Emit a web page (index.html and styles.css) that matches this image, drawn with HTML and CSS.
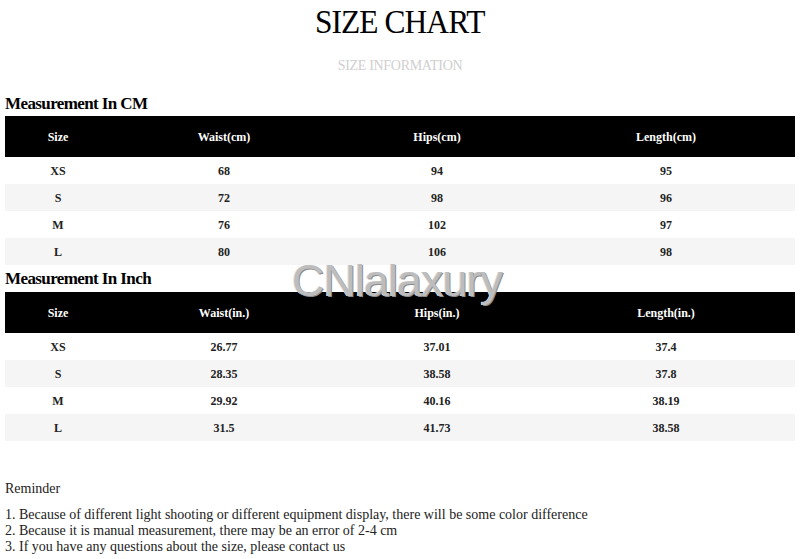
FILE: index.html
```html
<!DOCTYPE html>
<html>
<head>
<meta charset="utf-8">
<link rel="stylesheet" href="styles.css">
</head>
<body>
<div class="page">
  <h1 class="title"><span class="title-text">SIZE CHART</span></h1>
  <div class="subtitle">SIZE INFORMATION</div>

  <h2 class="section">Measurement In CM</h2>
  <table class="chart">
    <colgroup><col class="c1"><col class="c2"><col class="c3"><col class="c4"></colgroup>
    <thead><tr><th>Size</th><th>Waist(cm)</th><th>Hips(cm)</th><th>Length(cm)</th></tr></thead>
    <tbody>
      <tr><td>XS</td><td>68</td><td>94</td><td>95</td></tr>
      <tr><td>S</td><td>72</td><td>98</td><td>96</td></tr>
      <tr><td>M</td><td>76</td><td>102</td><td>97</td></tr>
      <tr><td>L</td><td>80</td><td>106</td><td>98</td></tr>
    </tbody>
  </table>

  <h2 class="section sec2">Measurement In Inch</h2>
  <table class="chart">
    <colgroup><col class="c1"><col class="c2"><col class="c3"><col class="c4"></colgroup>
    <thead><tr><th>Size</th><th>Waist(in.)</th><th>Hips(in.)</th><th>Length(in.)</th></tr></thead>
    <tbody>
      <tr><td>XS</td><td>26.77</td><td>37.01</td><td>37.4</td></tr>
      <tr><td>S</td><td>28.35</td><td>38.58</td><td>37.8</td></tr>
      <tr><td>M</td><td>29.92</td><td>40.16</td><td>38.19</td></tr>
      <tr><td>L</td><td>31.5</td><td>41.73</td><td>38.58</td></tr>
    </tbody>
  </table>

  <div class="reminder">Reminder</div>
  <div class="notes">
    <div>1. Because of different light shooting or different equipment display, there will be some color difference</div>
    <div>2. Because it is manual measurement, there may be an error of 2-4 cm</div>
    <div>3. If you have any questions about the size, please contact us</div>
  </div>

  <div class="watermark">CNlalaxury</div>
</div>
</body>
</html>
```

FILE: styles.css
```css
html, body {
  margin: 0;
  padding: 0;
  background: #fff;
}
body {
  font-family: "Liberation Serif", "Times New Roman", serif;
  color: #000;
}
.page {
  position: relative;
  width: 800px;
  height: 559px;
  overflow: hidden;
  padding: 0 5px;
  box-sizing: border-box;
}
.title {
  margin: 0;
  height: 44px;
  line-height: 44px;
  font-size: 34px;
  font-weight: normal;
  text-align: center;
}
.title-text {
  display: inline-block;
  letter-spacing: -1px;
  transform: scaleX(0.925);
}
.subtitle {
  height: 44px;
  line-height: 44px;
  font-size: 14px;
  color: #cfcfcf;
  text-align: center;
  letter-spacing: -0.3px;
}
.section {
  margin: 4px 0 0;
  height: 24px;
  line-height: 24px;
  font-size: 17px;
  font-weight: bold;
  letter-spacing: -0.6px;
}
.sec2 {
  margin-top: 1px;
  height: 26px;
  line-height: 26px;
}
.chart {
  width: 790px;
  border-collapse: collapse;
  table-layout: fixed;
  font-size: 12px;
  font-weight: bold;
}
.c1 { width: 106px; }
.c2 { width: 226px; }
.c3 { width: 200px; }
.c4 { width: 258px; }
.chart th {
  background: #000;
  color: #fff;
  height: 41px;
  padding: 2px 0 0;
  box-sizing: border-box;
  text-align: center;
  font-weight: bold;
}
.chart td {
  height: 27px;
  padding: 1px 0 0;
  box-sizing: border-box;
  text-align: center;
  color: #222;
}
.chart tbody tr:nth-child(even) td {
  background: #f5f5f5;
}
.reminder {
  margin-top: 38px;
  height: 20px;
  line-height: 20px;
  font-size: 14px;
  color: #222;
}
.notes {
  margin-top: 8px;
  font-size: 14px;
  line-height: 16px;
  color: #222;
}
.watermark {
  position: absolute;
  left: 292px;
  top: 264px;
  font-family: "Liberation Sans", Arial, sans-serif;
  font-size: 45px;
  line-height: 34px;
  letter-spacing: -1px;
  color: #bdbdbd;
  text-shadow: 1px 1px 0 #8e8e8e, -1px 0 0 #dedede;
}
```
